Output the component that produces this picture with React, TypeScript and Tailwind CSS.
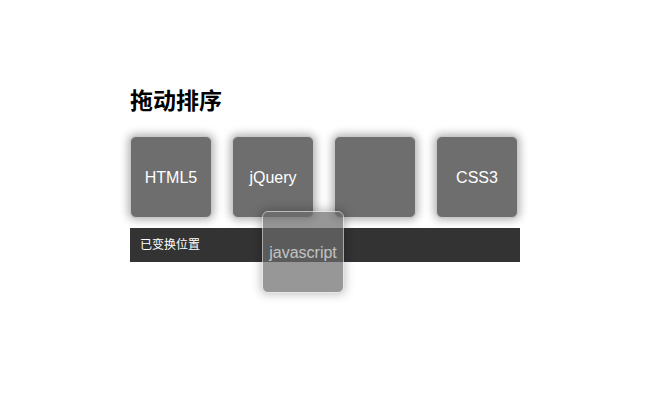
import React from "react"

const items = ["HTML5", "jQuery", "", "CSS3"]

export default function App() {
  return (
    <div className="w-[650px] h-[400px] bg-white font-['Liberation_Sans','Noto_Sans_CJK_SC',sans-serif]">
      <div className="relative ml-[130px] w-[390px] pt-[88px]">
        <h2 className="text-[23px] leading-[28px] font-bold text-black font-['Liberation_Serif','Noto_Sans_CJK_SC',serif]">
          拖动排序
        </h2>
        <ul className="mt-[20px] flex gap-[20px]">
          {items.map((item, i) => (
            <li
              key={i}
              className="w-[82px] h-[82px] flex items-center justify-center pt-[2px] rounded-[6px] border border-[#c8c8c8] bg-[#6e6e6e] text-white text-[16px] shadow-[0_0_8px_2px_rgba(0,0,0,0.3)]"
            >
              {item}
            </li>
          ))}
        </ul>
        <div className="mt-[10px] h-[34px] bg-[#333333] flex items-center pl-[10px] text-[12px] text-white">
          已变换位置
        </div>
        <div className="absolute left-[132px] top-[211px] w-[82px] h-[82px] flex items-center justify-center pt-[2px] rounded-[6px] border border-[#dddddd] bg-[#6c6c6c] opacity-70 text-white text-[16px] shadow-[0_0_8px_2px_rgba(0,0,0,0.3)]">
          javascript
        </div>
      </div>
    </div>
  )
}
